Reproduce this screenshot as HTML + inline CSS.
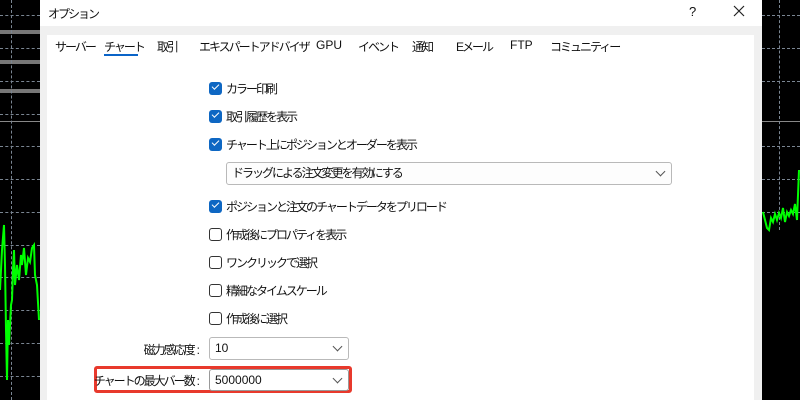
<!DOCTYPE html>
<html><head><meta charset="utf-8"><style>
*{margin:0;padding:0;box-sizing:border-box}
body{width:800px;height:400px;overflow:hidden;background:#000;position:relative;font-family:"Liberation Sans","Noto Sans CJK JP",sans-serif;font-size:12px;color:#111}
.a{position:absolute}
.j{letter-spacing:-2px}
.hd{position:absolute;height:0;border-top:1px dashed #7a8592}
.vd{position:absolute;width:0;border-left:1px dashed #7a8592}
.cb{position:absolute;left:209px;width:13px;height:13px;border-radius:3px;background:#0e67c3}
.cb.u{background:#fff;border:1px solid #333}
.cb:not(.u)::after{content:"";position:absolute;left:3px;top:2px;width:6px;height:3px;border-left:1.3px solid #fff;border-bottom:1.3px solid #fff;transform:rotate(-45deg)}
.lb{position:absolute;left:226px;white-space:nowrap;letter-spacing:-2px}
.sel{position:absolute;background:#fff;border:1px solid #b9b9b9;border-radius:3px;padding-left:5px;line-height:20px;white-space:nowrap}
.ch{position:absolute;right:7px;top:5px;width:7px;height:7px;border-right:1px solid #555;border-bottom:1px solid #555;transform:rotate(45deg)}
.tab{position:absolute;top:38px;white-space:nowrap;letter-spacing:-2px}
.rl{position:absolute;right:600px;white-space:nowrap;letter-spacing:-2px}
.rl b{font-weight:normal;letter-spacing:0;margin-left:3px}
</style></head><body>
<div class="hd" style="left:0;width:40px;top:15px"></div>
<div class="hd" style="left:0;width:40px;top:48px"></div>
<div class="hd" style="left:0;width:40px;top:81px"></div>
<div class="hd" style="left:0;width:40px;top:114px"></div>
<div class="hd" style="left:0;width:40px;top:146px"></div>
<div class="hd" style="left:0;width:40px;top:179px"></div>
<div class="hd" style="left:0;width:40px;top:212px"></div>
<div class="hd" style="left:0;width:40px;top:245px"></div>
<div class="hd" style="left:0;width:40px;top:277px"></div>
<div class="hd" style="left:0;width:40px;top:310px"></div>
<div class="hd" style="left:0;width:40px;top:343px"></div>
<div class="hd" style="left:0;width:40px;top:376px"></div>
<div class="a" style="left:0;width:40px;top:30px;height:4px;background:#777"></div>
<div class="a" style="left:0;width:40px;top:60px;height:4px;background:#777"></div>
<div class="a" style="left:0;width:40px;top:89px;height:4px;background:#777"></div>
<div class="a" style="left:0;width:40px;top:121px;height:1px;background:#888"></div>
<div class="vd" style="left:11px;top:0;height:400px"></div>
<div class="hd" style="left:762px;width:38px;top:15px"></div>
<div class="hd" style="left:762px;width:38px;top:48px"></div>
<div class="hd" style="left:762px;width:38px;top:81px"></div>
<div class="hd" style="left:762px;width:38px;top:146px"></div>
<div class="hd" style="left:762px;width:38px;top:179px"></div>
<div class="hd" style="left:762px;width:38px;top:212px"></div>
<div class="a" style="left:762px;width:38px;top:121px;height:1px;background:#888"></div>
<div class="vd" style="left:779px;top:0;height:230px"></div>
<svg class="a" style="left:0;top:0" width="800" height="400">
<polyline fill="none" stroke="#00ff00" stroke-width="2" points="0,290 2,250 4,225 5,265 6,330 7,380 8,320 9,345 11,305 12,300 13,270 14,250 15,285 17,265 19,280 21,255 22,265 24,248 26,275 28,258 30,262 32,248 34,245 35,275 37,285 39,320"/>
<polyline fill="none" stroke="#00ff00" stroke-width="2" points="763,212 765,220 767,228 769,230 771,218 773,222 775,214 777,220 779,213 781,218 783,208 785,222 787,212 789,216 791,210 793,214 795,204 797,220 799,170"/>
</svg>
<div class="a" style="left:40px;top:0;width:722px;height:400px;background:#f0f0f0"></div>
<div class="a" style="left:40px;top:0;width:722px;height:26px;background:#fff"></div>
<div class="a j" style="left:48px;top:5px">オプション</div>
<div class="a" style="left:689px;top:4px;font-size:13px">?</div>
<svg class="a" style="left:733px;top:5px" width="12" height="12"><path d="M1 1L11 11M11 1L1 11" stroke="#222" stroke-width="1.2"/></svg>
<div class="a" style="left:47px;top:35px;width:707px;height:365px;background:#fff"></div>
<div class="tab" style="left:55px">サーバー</div>
<div class="tab" style="left:104px">チャート</div>
<div class="a" style="left:104px;top:54px;width:34px;height:2px;background:#0a64c8"></div>
<div class="tab" style="left:157px">取引</div>
<div class="tab" style="left:199px">エキスパートアドバイザ</div>
<div class="tab" style="left:316px;letter-spacing:0">GPU</div>
<div class="tab" style="left:358px">イベント</div>
<div class="tab" style="left:412px">通知</div>
<div class="tab" style="left:456px">Eメール</div>
<div class="tab" style="left:510px;letter-spacing:0">FTP</div>
<div class="tab" style="left:550px">コミュニティー</div>

<div class="cb" style="top:82px"></div><div class="lb" style="top:80px">カラー印刷</div>
<div class="cb" style="top:110px"></div><div class="lb" style="top:108px">取引履歴を表示</div>
<div class="cb" style="top:138px"></div><div class="lb" style="top:136px">チャート上にポジションとオーダーを表示</div>
<div class="sel j" style="left:226px;top:162px;width:446px;height:23px;background:#fdfdfd">ドラッグによる注文変更を有効にする<div class="ch"></div></div>
<div class="cb" style="top:200px"></div><div class="lb" style="top:198px">ポジションと注文のチャートデータをプリロード</div>
<div class="cb u" style="top:228px"></div><div class="lb" style="top:226px">作成後にプロパティを表示</div>
<div class="cb u" style="top:256px"></div><div class="lb" style="top:254px">ワンクリックで選択</div>
<div class="cb u" style="top:284px"></div><div class="lb" style="top:282px">精細なタイムスケール</div>
<div class="cb u" style="top:312px"></div><div class="lb" style="top:310px">作成後に選択</div>

<div class="rl" style="top:341px">磁力感応度<b>:</b></div>
<div class="sel" style="left:209px;top:337px;width:140px;height:23px">10<div class="ch"></div></div>
<div class="a" style="left:94px;top:366px;width:258px;height:27px;border:3px solid #e8392c;border-radius:3px"></div>
<div class="rl" style="top:372px">チャートの最大バー数<b>:</b></div>
<div class="sel" style="left:209px;top:369px;width:140px;height:22px;border-color:#999">5000000<div class="ch"></div></div>
</body></html>
